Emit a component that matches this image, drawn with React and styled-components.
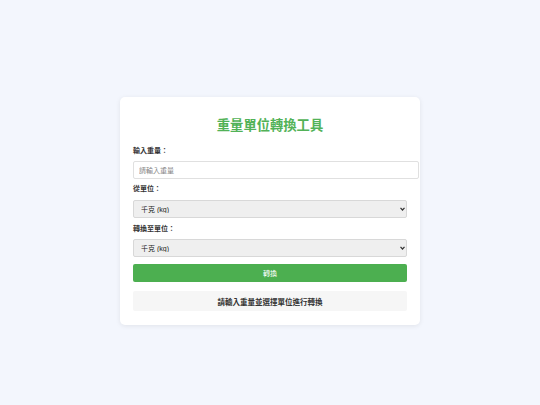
import React, { useState } from 'react';
import styled, { createGlobalStyle } from 'styled-components';

const GlobalStyle = createGlobalStyle`
  html, body {
    margin: 0;
    padding: 0;
    background: #f3f6fd;
    font-family: "Liberation Sans", "Noto Sans CJK TC", Arial, sans-serif;
  }
`;

const Page = styled.div`
  width: 540px;
  height: 405px;
  display: flex;
  align-items: flex-start;
  justify-content: center;
`;

const Card = styled.div`
  box-sizing: border-box;
  width: 300px;
  margin-top: 97px;
  padding: 20px 13px 14px;
  background: #fff;
  border-radius: 5px;
  box-shadow: 0 1px 5px rgba(0, 0, 0, 0.08);
  display: flex;
  flex-direction: column;
`;

const Title = styled.h1`
  margin: 0 0 11px;
  height: 18px;
  text-align: center;
  color: #52b257;
  font-size: 13.3px;
  line-height: 18px;
  font-weight: bold;
`;

const Label = styled.label`
  display: block;
  height: 9px;
  font-size: 7px;
  line-height: 9px;
  font-weight: bold;
  color: #333;
  margin-bottom: ${p => p.$gap || 7}px;
`;

const Field = styled.div`
  position: relative;
  margin-bottom: ${p => p.$gap || 5}px;
`;

const Input = styled.input`
  display: block;
  box-sizing: content-box;
  width: 100%;
  height: 16px;
  padding: 0 5px;
  margin: 0;
  border: 1px solid #e0e0e0;
  border-radius: 2px;
  font-family: inherit;
  font-size: 7px;
  color: #333;
  background: #fff;
  outline: none;

  &::placeholder {
    color: #888;
  }
`;

const Select = styled.select`
  display: block;
  appearance: none;
  box-sizing: border-box;
  width: 100%;
  height: 18px;
  margin: 0;
  padding: 0 7px;
  border: 1px solid #d8d8d8;
  border-radius: 2px;
  font-family: inherit;
  font-size: 7px;
  color: #222;
  background: #efefef;
  outline: none;
`;

const Chevron = styled.svg`
  position: absolute;
  right: 2px;
  top: 7px;
  width: 5px;
  height: 4px;
  pointer-events: none;
`;

const Button = styled.button`
  display: block;
  height: 18px;
  margin: 0;
  border: none;
  border-radius: 2px;
  background: #4caf50;
  color: #fff;
  font-family: inherit;
  font-size: 7px;
  cursor: pointer;
`;

const Result = styled.div`
  margin-top: 9px;
  height: 20px;
  display: flex;
  align-items: center;
  justify-content: center;
  background: #f6f6f6;
  border-radius: 2px;
  font-size: 7.5px;
  font-weight: bold;
  color: #333;
`;

const units = [
  ['kg', '千克 (kg)'],
  ['g', '克 (g)'],
  ['lb', '磅 (lb)'],
  ['oz', '盎司 (oz)'],
];

const factors = { kg: 1, g: 0.001, lb: 0.45359237, oz: 0.028349523 };

const UnitSelect = ({ value, onChange }) => (
  <>
    <Select value={value} onChange={e => onChange(e.target.value)}>
      {units.map(([k, t]) => (
        <option key={k} value={k}>{t}</option>
      ))}
    </Select>
    <Chevron viewBox="0 0 5 4">
      <path d="M0.5 0.8 L2.5 3 L4.5 0.8" fill="none" stroke="#333" strokeWidth="1.2" />
    </Chevron>
  </>
);

export default function App() {
  const [value, setValue] = useState('');
  const [from, setFrom] = useState('kg');
  const [to, setTo] = useState('kg');
  const [result, setResult] = useState('請輸入重量並選擇單位進行轉換');

  const convert = () => {
    const n = parseFloat(value);
    if (isNaN(n)) {
      setResult('請輸入重量並選擇單位進行轉換');
      return;
    }
    const out = (n * factors[from]) / factors[to];
    setResult(`${n} ${from} = ${out.toFixed(4)} ${to}`);
  };

  return (
    <Page>
      <GlobalStyle />
      <Card>
        <Title>重量單位轉換工具</Title>
        <Label $gap={6}>輸入重量：</Label>
        <Field $gap={5}>
          <Input
            type="number"
            placeholder="請輸入重量"
            value={value}
            onChange={e => setValue(e.target.value)}
          />
        </Field>
        <Label $gap={7}>從單位：</Label>
        <Field $gap={6}>
          <UnitSelect value={from} onChange={setFrom} />
        </Field>
        <Label $gap={6}>轉換至單位：</Label>
        <Field $gap={7}>
          <UnitSelect value={to} onChange={setTo} />
        </Field>
        <Button onClick={convert}>轉換</Button>
        <Result>{result}</Result>
      </Card>
    </Page>
  );
}
